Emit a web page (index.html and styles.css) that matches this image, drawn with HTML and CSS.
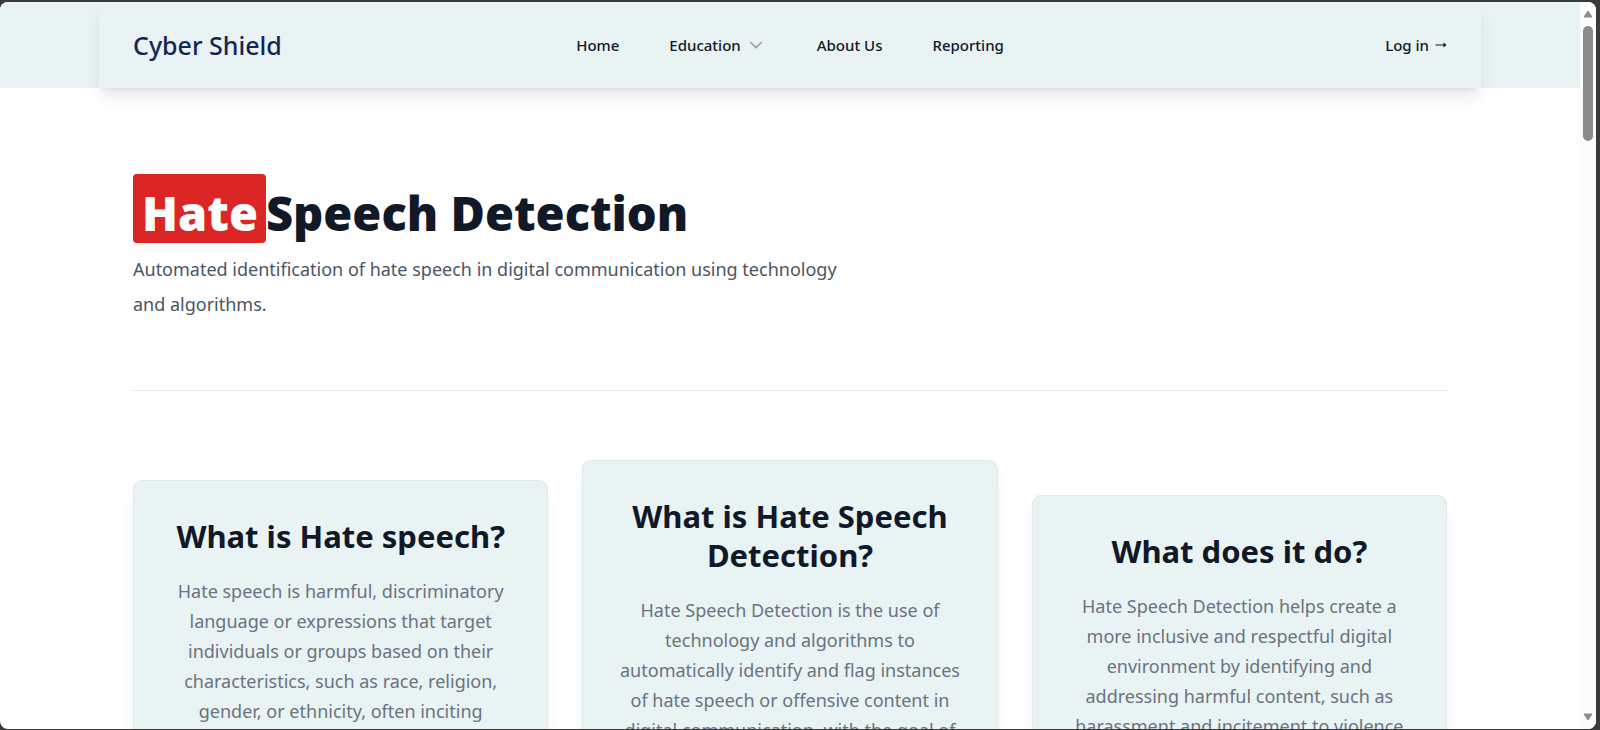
FILE: index.html
```html
<!DOCTYPE html>
<html lang="en">
<head>
<meta charset="utf-8">
<meta name="viewport" content="width=device-width, initial-scale=1">
<title>Cyber Shield</title>
<link rel="stylesheet" href="styles.css">
</head>
<body>
<div class="window">
  <div class="page">
    <header class="site-header">
      <div class="header-inner">
        <div class="header-side"><a class="brand" href="#">Cyber Shield</a></div>
        <nav class="nav" aria-label="Main">
          <a class="nav-link" href="#">Home</a>
          <button class="nav-link nav-button" type="button" aria-expanded="false">Education
            <svg class="chevron" viewBox="0 0 20 20" aria-hidden="true"><path d="M5.3 7.700 10 12.400l4.700-4.700" fill="none" stroke="currentColor" stroke-width="1.500" stroke-linecap="round" stroke-linejoin="round"/></svg>
          </button>
          <a class="nav-link" href="#">About Us</a>
          <a class="nav-link" href="#">Reporting</a>
        </nav>
        <div class="header-side header-end">
          <a class="nav-link login" href="#">Log in
            <svg class="arrow" viewBox="0 0 12 8" aria-hidden="true"><path d="M0.500 4H10" fill="none" stroke="currentColor"/><path d="M8.500 1.500 11.500 4 8.500 6.500z" fill="currentColor"/></svg>
          </a>
        </div>
      </div>
    </header>
    <main class="content">
      <section class="hero">
        <h1 class="hero-title"><span class="hero-mark">Hate</span>Speech Detection</h1>
        <p class="hero-lead">Automated identification of hate speech in digital communication using technology and algorithms.</p>
      </section>
      <section class="cards">
        <article class="card">
          <h2 class="card-title">What is Hate speech?</h2>
          <p class="card-text">Hate speech is harmful, discriminatory language or expressions that target individuals or groups based on their characteristics, such as race, religion, gender, or ethnicity, often inciting violence or prejudice.</p>
        </article>
        <article class="card">
          <h2 class="card-title">What is Hate Speech Detection?</h2>
          <p class="card-text">Hate Speech Detection is the use of technology and algorithms to automatically identify and flag instances of hate speech or offensive content in digital communication, with the goal of reducing its impact.</p>
        </article>
        <article class="card">
          <h2 class="card-title">What does it do?</h2>
          <p class="card-text">Hate Speech Detection helps create a more inclusive and respectful digital environment by identifying and addressing harmful content, such as harassment and incitement to violence</p>
        </article>
      </section>
    </main>
  </div>
  <div class="scrollbar" aria-hidden="true">
    <svg class="scroll-arrow" viewBox="0 0 10 8"><path d="M5 1 9 7H1z" fill="currentColor" stroke="currentColor" stroke-linejoin="round"/></svg>
    <div class="scroll-track"><div class="scroll-thumb"></div></div>
    <svg class="scroll-arrow" viewBox="0 0 10 8"><path d="M5 7 1 1h8z" fill="currentColor" stroke="currentColor" stroke-linejoin="round"/></svg>
  </div>
</div>
</body>
</html>
```
FILE: styles.css
```css
*, *::before, *::after { box-sizing: border-box; }

body {
  margin: 0;
  padding: 2px 4px 1px 0;
  height: 100vh;
  background: #3a3a3a;
  color: #111827;
  font-family: "Noto Sans", "Open Sans", sans-serif;
}

h1, h2, p { margin: 0; }
a { color: inherit; text-decoration: none; }

.window {
  display: flex;
  height: 100%;
  overflow: hidden;
  border-radius: 8px;
  background: #fff;
}

.page {
  flex: 1;
  min-width: 0;
  overflow-y: auto;
  scrollbar-width: none;
}

.site-header { background: #e9f3f4; }

.header-inner {
  display: flex;
  align-items: center;
  max-width: 1382px;
  height: 86px;
  margin: 0 auto;
  padding: 0 34px;
  box-shadow: 0 11px 16px -3px rgba(0, 0, 0, 0.1), 0 4px 6px -4px rgba(0, 0, 0, 0.1);
}

.header-side { flex: 1; }
.header-end { display: flex; justify-content: flex-end; }

.brand {
  color: #172554;
  font-size: 25px;
  font-weight: 500;
}

.nav { display: flex; align-items: center; gap: 50px; }

.nav-link {
  font-size: 15px;
  font-weight: 500;
  line-height: 26px;
}

.nav-button {
  display: flex;
  align-items: center;
  gap: 4px;
  padding: 0;
  border: 0;
  background: none;
  color: inherit;
  font-family: inherit;
}

.chevron { width: 22px; height: 22px; color: #9ca3af; }
.login { display: flex; align-items: center; gap: 6px; }
.arrow { width: 12px; height: 8px; }

.content {
  max-width: 1382px;
  margin: 0 auto;
  padding: 86px 34px 69px;
}

.hero {
  padding-bottom: 68px;
  border-bottom: 1px solid #e5e7eb;
}

.hero-title {
  font-size: 47px;
  font-weight: 900;
  line-height: 60px;
}

.hero-mark {
  display: inline-block;
  padding: 9px 8px 0 9px;
  border-radius: 4px;
  background: #dc2626;
  color: #fff;
}

.hero-lead {
  max-width: 726px;
  margin-top: 9px;
  color: #4b5563;
  font-size: 18px;
  line-height: 35px;
}

.cards {
  display: grid;
  grid-template-columns: repeat(3, minmax(0, 1fr));
  align-items: center;
  gap: 34px;
  padding-top: 69px;
}

.card {
  padding: 36px 34px;
  border: 1px solid #e0e9eb;
  border-radius: 9px;
  background: #e9f3f4;
  box-shadow: 0 11px 16px -3px rgba(0, 0, 0, 0.08), 0 4px 6px -4px rgba(0, 0, 0, 0.08);
  text-align: center;
}

.card-title {
  font-size: 31px;
  font-weight: 700;
  line-height: 39px;
}

.card-text {
  margin-top: 20px;
  color: #6b7280;
  font-size: 18px;
  line-height: 30px;
}

.scrollbar {
  display: flex;
  flex-direction: column;
  align-items: center;
  gap: 8px;
  width: 16px;
  padding: 8px 0;
  background: #fcfcfc;
  color: #8b8b8b;
}

.scroll-arrow { width: 10px; height: 8px; }
.scroll-track { flex: 1; }

.scroll-thumb {
  width: 10px;
  height: 17%;
  min-height: 24px;
  border-radius: 5px;
  background: #8b8b8b;
}
```
